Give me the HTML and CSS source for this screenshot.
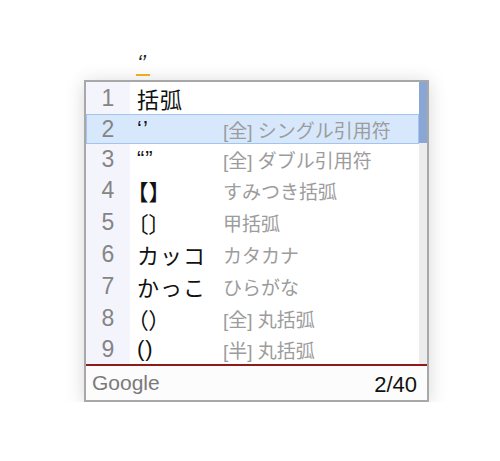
FILE: index.html
```html
<!DOCTYPE html>
<html lang="ja">
<head>
<meta charset="utf-8">
<title>IME候補</title>
<link rel="stylesheet" href="styles.css">
</head>
<body>
<div class="stage">
  <div class="input"><span class="comp">‘’</span></div>
  <div class="panel">
    <div class="body">
      <div class="list">
        <div class="row"><span class="num">1</span><span class="cand">括弧</span><span class="note"></span></div>
        <div class="row sel"><span class="num">2</span><span class="cand">‘’</span><span class="note">[全] シングル引用符</span></div>
        <div class="row"><span class="num">3</span><span class="cand">“”</span><span class="note">[全] ダブル引用符</span></div>
        <div class="row"><span class="num">4</span><span class="cand brk">【】</span><span class="note">すみつき括弧</span></div>
        <div class="row"><span class="num">5</span><span class="cand brk">〔〕</span><span class="note">甲括弧</span></div>
        <div class="row"><span class="num">6</span><span class="cand">カッコ</span><span class="note">カタカナ</span></div>
        <div class="row"><span class="num">7</span><span class="cand">かっこ</span><span class="note">ひらがな</span></div>
        <div class="row"><span class="num">8</span><span class="cand brk">（）</span><span class="note">[全] 丸括弧</span></div>
        <div class="row"><span class="num">9</span><span class="cand">()</span><span class="note">[半] 丸括弧</span></div>
      </div>
      <div class="scroll"><div class="thumb"></div></div>
    </div>
    <div class="footer"><span class="brand">Google</span><span class="count">2/40</span></div>
  </div>
</div>
</body>
</html>
```

FILE: styles.css
```css
html, body {
  margin: 0;
  padding: 0;
  background: #ffffff;
}

.stage {
  padding: 50px 0 0 84px;
  font-family: "Liberation Sans", Arial, "Noto Sans CJK JP", sans-serif;
}

.input {
  padding-left: 52px;
  height: 30px;
}

.comp {
  display: inline-block;
  font-size: 22px;
  line-height: 26px;
  height: 26px;
  width: 14px;
  color: #222;
  border-bottom: 2px solid #f0aa1e;
  font-style: italic;
  letter-spacing: -1px;
  padding-left: 1px;
  box-sizing: border-box;
}

.panel {
  width: 341px;
  border: 2px solid #a8a8a8;
  background: #ffffff;
  box-shadow: 0 2px 18px rgba(0, 0, 0, 0.16);
}

.body {
  display: flex;
  border-bottom: 2px solid #8e1b1b;
}

.list {
  flex: 1;
  height: 282px;
  display: grid;
  grid-template-rows: repeat(9, 1fr);
}

.row {
  display: grid;
  grid-template-columns: 44px 93px 1fr;
  align-items: center;
  white-space: nowrap;
}

.num {
  align-self: stretch;
  display: flex;
  align-items: center;
  justify-content: center;
  background: #f4f4fd;
  color: #858585;
  font-size: 23px;
}

.cand {
  padding-left: 7px;
  font-size: 22px;
  color: #111;
  font-family: "Liberation Sans", "Noto Sans CJK JP", sans-serif;
  letter-spacing: 1px;
}

.cand.brk {
  font-feature-settings: "palt";
}

.note {
  font-size: 19px;
  color: #9c9c9c;
  font-family: "Liberation Sans", "Noto Sans CJK JP", sans-serif;
}

.row.sel {
  background: #d7e8fc;
  box-shadow: inset 0 0 0 1px #a2c4ee;
}

.row.sel .num {
  background: transparent;
}

.scroll {
  width: 8px;
  background: #ececec;
}

.thumb {
  height: 61px;
  background: #89a6d4;
}

.footer {
  height: 34px;
  display: flex;
  align-items: center;
  justify-content: space-between;
  padding: 0 10px 0 6px;
  background: #fcfcfc;
}

.brand {
  font-size: 21px;
  color: #7a7a7a;
}

.count {
  font-size: 22px;
  color: #111;
  padding-top: 4px;
}
```
